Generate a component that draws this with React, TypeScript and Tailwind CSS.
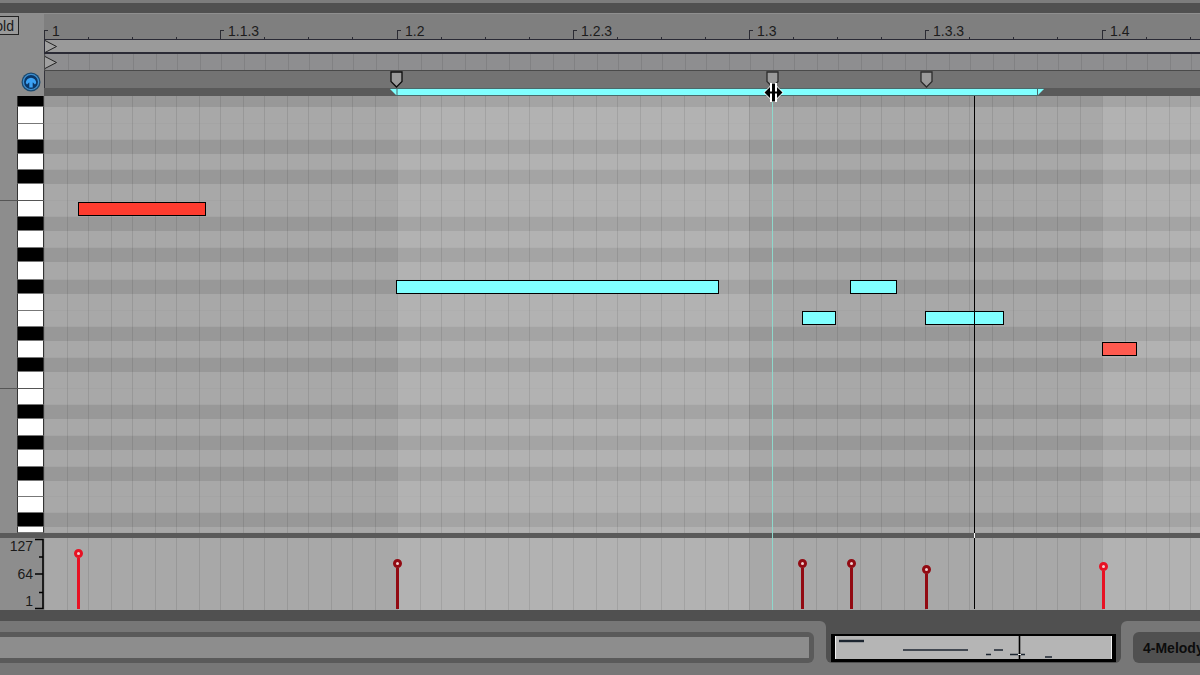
import { useState } from 'react';

type Note = { id: string; x: number; y: number; w: number; color: string };
type Velocity = { id: string; x: number; h: number; active: boolean };

// heights of the note rows from top to bottom
const rows: { h: number; black: boolean; octave?: boolean }[] = [
  { h: 11, black: true },
  { h: 17, black: false },
  { h: 16, black: false },
  { h: 14, black: true },
  { h: 16, black: false },
  { h: 14, black: true },
  { h: 17, black: false, octave: true },
  { h: 16, black: false },
  { h: 14, black: true },
  { h: 17, black: false },
  { h: 14, black: true },
  { h: 18, black: false },
  { h: 14, black: true },
  { h: 17, black: false },
  { h: 16, black: false },
  { h: 14, black: true },
  { h: 17, black: false },
  { h: 14, black: true },
  { h: 17, black: false, octave: true },
  { h: 16, black: false },
  { h: 14, black: true },
  { h: 17, black: false },
  { h: 14, black: true },
  { h: 17, black: false },
  { h: 14, black: true },
  { h: 16, black: false },
  { h: 16, black: false },
  { h: 14, black: true },
  { h: 6, black: false },
];

const beats = [
  { id: 'b1', width: 'w-[353px] shrink-0', bright: false, labels: ['1', '1.1.3'] },
  { id: 'b2', width: 'w-[352px] shrink-0', bright: true, labels: ['1.2', '1.2.3'] },
  { id: 'b3', width: 'w-[353px] shrink-0', bright: false, labels: ['1.3', '1.3.3'] },
  { id: 'b4', width: 'flex-1 min-w-0', bright: true, labels: ['1.4'] },
];

const notes: Note[] = [
  { id: 'n1', x: 34, y: 106, w: 128, color: 'bg-[#ff3c2f]' },
  { id: 'n2', x: 352, y: 184, w: 323, color: 'bg-[#80ffff]' },
  { id: 'n3', x: 758, y: 215, w: 34, color: 'bg-[#80ffff]' },
  { id: 'n4', x: 806, y: 184, w: 47, color: 'bg-[#80ffff]' },
  { id: 'n5', x: 881, y: 215, w: 79, color: 'bg-[#80ffff]' },
  { id: 'n6', x: 1058, y: 246, w: 35, color: 'bg-[#ff5a4f]' },
];

const velocities: Velocity[] = [
  { id: 'v1', x: 30, h: 60, active: true },
  { id: 'v2', x: 349, h: 50, active: false },
  { id: 'v3', x: 754, h: 50, active: false },
  { id: 'v4', x: 803, h: 50, active: false },
  { id: 'v5', x: 878, h: 44, active: false },
  { id: 'v6', x: 1055, h: 47, active: true },
];

const steps = Array.from({ length: 16 }, (_, i) => i);

function GridLines({ shade = true }: { shade?: boolean }) {
  return (
    <div className="absolute inset-0 flex overflow-hidden">
      {beats.map((beat) => (
        <div
          key={beat.id}
          className={`flex overflow-hidden ${beat.width} ${shade && beat.bright ? 'bg-white/12' : ''}`}
        >
          {steps.map((i) => (
            <div
              key={i}
              className={`shrink-0 border-l border-black/9 ${i % 2 ? 'w-[21px]' : 'w-[23px]'}`}
            />
          ))}
        </div>
      ))}
    </div>
  );
}

function Ruler() {
  return (
    <div className="flex h-[25px] flex-1 overflow-hidden">
      {beats.map((beat) => (
        <div key={beat.id} className={`flex overflow-hidden ${beat.width}`}>
          {[0, 1].map((half) => (
            <div key={half} className="flex w-44 shrink-0 items-end">
              <div className="relative h-[9px] w-11 shrink-0 border-l border-[#2b2b33]">
                <div className="h-px w-[3px] bg-[#2b2b33]" />
                <span className="absolute bottom-0 left-[7px] text-[14px] leading-4 text-[#1c1c1c]">
                  {beat.labels[half]}
                </span>
              </div>
              {[1, 2, 3].map((t) => (
                <div key={t} className="h-[2px] w-11 shrink-0 border-l border-[#2b2b33]" />
              ))}
            </div>
          ))}
        </div>
      ))}
    </div>
  );
}

function StartMarker() {
  return (
    <svg width="13" height="13" viewBox="0 0 13 13" className="block" fill="#a0a0a0" stroke="#222">
      <path d="M0 0.5 L11.5 6.5 L0 12.5" />
    </svg>
  );
}

function StretchMarker({ dim = false }: { dim?: boolean }) {
  return (
    <svg width="13" height="17" viewBox="0 0 13 17" className="block">
      <path
        d="M1 1 H12 V10.5 L6.5 16 L1 10.5 Z"
        fill="#9a9a9a"
        stroke={dim ? '#2c2c2c' : '#0c0c0c'}
        strokeWidth="1.3"
      />
    </svg>
  );
}

function ResizeCursor() {
  return (
    <svg width="21" height="21" viewBox="0 0 21 21" className="block">
      <path d="M7 1 H14 V4 L20.5 10.5 L14 17 V20 H7 V17 L0.5 10.5 L7 4 Z" fill="#fff" />
      <path d="M10.5 1.5 V19.5" stroke="#000" strokeWidth="3" />
      <path
        d="M1.5 10.5 L7 5 V9.5 H14 V5 L19.5 10.5 L14 16 V11.5 H7 V16 Z"
        fill="#000"
      />
    </svg>
  );
}

function Headphones() {
  return (
    <svg width="20" height="20" viewBox="0 0 20 20" className="block">
      <circle cx="10" cy="10" r="9.5" fill="#1b4a70" />
      <circle cx="10" cy="10" r="7.6" fill="#0c3766" stroke="#3f8fcf" strokeWidth="1.3" />
      <path
        d="M4.8 11 A5.2 5.2 0 0 1 15.2 11 L14 12.6 L12 10.6 H11.7 V15.6 H8.3 V10.6 H8 L6 12.6 Z"
        fill="#3ba2f5"
      />
    </svg>
  );
}

function VelocityScale() {
  return (
    <div className="flex h-[72px] w-11 shrink-0 bg-[#8d8d8d] text-[14px] leading-4 text-[#1a1a1a]">
      <div className="flex w-[33px] flex-col items-end justify-between pb-[1px]">
        <span>127</span>
        <span>64</span>
        <span>1</span>
      </div>
      <svg width="11" height="72" viewBox="1 0 11 72" className="block" fill="none" stroke="#000">
        <path d="M3 1.5 H11 V70.5 H3" strokeWidth="1.6" />
        <path d="M3 36 H11 M7 19 H11 M7 54.5 H11" strokeWidth="1.4" />
      </svg>
    </div>
  );
}

function Overview() {
  return (
    <svg width="285" height="28" viewBox="0 0 285 28" className="block">
      <rect width="285" height="28" fill="#000" />
      <rect x="4" y="2" width="277" height="23" fill="#b5b5b5" />
      <path d="M4.5 2 V25 M280.5 2 V25" stroke="#f2f2f2" />
      <g stroke="#1c2530">
        <path d="M8 7 H33" strokeWidth="2.4" />
        <path
          d="M72 16 H137 M155 20.5 H160 M163 16 H172 M179 20.5 H194 M214 23 H221"
          strokeWidth="1.6"
        />
      </g>
      <path d="M188.5 2 V25" stroke="#000" strokeWidth="1.6" />
      <rect x="187" y="20" width="3" height="1" fill="#eee" />
    </svg>
  );
}

export default function App() {
  const [fold, setFold] = useState(false);
  const [preview, setPreview] = useState(true);

  return (
    <div className="flex min-h-screen flex-col overflow-hidden bg-[#777] font-['Liberation_Sans',Arial,sans-serif]">
      <div className="h-[3px] bg-[#7c7c7c]" />
      <div className="h-[10px] bg-[#505050]" />

      <div className="flex border-t border-[#8f8f8f]">
        <div className="flex h-[82px] w-11 shrink-0 flex-col justify-between overflow-hidden bg-[#8d8d8d] pt-[2px]">
          <button
            type="button"
            aria-pressed={fold}
            onClick={() => setFold(!fold)}
            className="-ml-[18px] flex h-[19px] w-[37px] items-center justify-end border border-[#222] bg-[#999] pr-1 text-[14px] leading-4 text-[#1a1a1a]"
          >
            Fold
          </button>
          <button
            type="button"
            aria-label="Preview"
            aria-pressed={preview}
            onClick={() => setPreview(!preview)}
            className="mb-1 ml-[21px] size-5"
          >
            <Headphones />
          </button>
        </div>

        <div className="flex min-w-0 flex-1 flex-col">
          <div className="flex bg-[#7f7f7f]">
            <Ruler />
          </div>
          <div className="h-[15px] border-t border-b-2 border-l border-[#2a2a35] bg-[#9a9a9a]">
            <StartMarker />
          </div>
          <div className="relative h-[17px] border-b border-l border-[#4a4a4a] bg-[#8e8e90] pt-[2px]">
            <GridLines shade={false} />
            <div className="relative">
              <StartMarker />
            </div>
          </div>
          <div className="relative h-[17px] border-l border-[#33333b] bg-[#737373]">
            <div className="absolute top-0 left-[345px]">
              <StretchMarker />
            </div>
            <div className="absolute top-0 left-[721px]">
              <StretchMarker dim />
            </div>
            <div className="absolute top-0 left-[875px]">
              <StretchMarker dim />
            </div>
          </div>
          {/* time span of the selected notes */}
          <div className="relative h-2 bg-[#5a5a5a]">
            <svg width="655" height="8" viewBox="0 0 655 8" className="absolute top-0 left-[346px]">
              <path d="M0 1 H654 L648 7 H6 Z" fill="#80ffff" />
              <path d="M7 1 V8 M647.5 1 V7" stroke="#4a6a6a" />
              <path d="M0 0.5 H654 M6 7.5 H648" stroke="#4a6a6a" />
            </svg>
            <div className="absolute -top-[6px] left-[719px] z-20">
              <ResizeCursor />
            </div>
          </div>
        </div>
      </div>

      <div className="relative">
        <div className="flex">
          <div className="w-11 shrink-0 bg-[#8d8d8d]">
            {rows.map((row, i) => (
              <div
                key={i}
                className={`flex justify-end ${row.octave ? 'border-b border-[#555]' : ''}`}
                style={{ height: row.h }}
              >
                <div
                  className={`w-[27px] border-x border-[#333] ${
                    row.octave ? '' : 'border-b border-b-[#777]'
                  } ${row.black ? 'bg-black' : 'bg-white'}`}
                />
              </div>
            ))}
          </div>
          <div className="relative min-w-0 flex-1 overflow-hidden">
            {rows.map((row, i) => (
              <div
                key={i}
                className={row.black ? 'bg-[#989898]' : 'border-b border-[#a4a4a4] bg-[#a8a8a8]'}
                style={{ height: row.h }}
              />
            ))}
            <GridLines />
            {notes.map((note) => (
              <div
                key={note.id}
                className={`absolute h-[14px] border border-black ${note.color}`}
                style={{ left: note.x, top: note.y, width: note.w }}
              />
            ))}
          </div>
        </div>

        <div className="h-[5px] bg-[#5a5a5a]" />

        <div className="flex">
          <VelocityScale />
          <div className="relative min-w-0 flex-1 overflow-hidden bg-[#a8a8a8]">
            <GridLines />
            {velocities.map((v) => (
              <div
                key={v.id}
                className="absolute bottom-[1px] flex w-[9px] flex-col items-center"
                style={{ left: v.x, height: v.h }}
              >
                <div
                  className={`size-[9px] shrink-0 rounded-full border-3 bg-[#f0d0d0] ${
                    v.active ? 'border-[#e81123]' : 'border-[#920a12]'
                  }`}
                />
                <div className={`w-[3px] flex-1 ${v.active ? 'bg-[#e81123]' : 'bg-[#920a12]'}`} />
              </div>
            ))}
          </div>
        </div>

        <div className="absolute top-0 bottom-0 left-[772px] w-px bg-[#8ed8cc]" />
        <div className="absolute top-0 bottom-[1px] left-[974px] w-px bg-black" />
        <div className="absolute bottom-[72px] left-[974px] h-[5px] w-px bg-white" />
      </div>

      <div className="h-[11px] bg-[#505050]" />
      <div className="flex h-[43px] bg-[#505050]">
        <div className="min-w-0 flex-1 rounded-tr-md bg-[#777] pt-[11px] pr-3">
          <div className="h-[31px] rounded-r-md bg-[#5a5a5a] py-[5px] pr-[5px]">
            <div className="h-[21px] bg-[#8d8d8d]" />
          </div>
        </div>
        <div className="bg-[#777]">
          <div className="h-[42px] rounded-b-md bg-[#505050] px-[5px] pt-[13px]">
            <Overview />
          </div>
        </div>
        <div className="w-[79px] shrink-0 rounded-tl-md bg-[#777] pt-[11px] pl-3">
          <button
            type="button"
            className="flex h-[31px] w-full items-center overflow-hidden rounded-l-md bg-[#505050] pl-[10px] text-[14px] leading-4 font-bold whitespace-nowrap text-[#0c0c0c]"
          >
            4-Melody
          </button>
        </div>
      </div>
      <div className="flex-1 bg-[#777]" />
    </div>
  );
}
